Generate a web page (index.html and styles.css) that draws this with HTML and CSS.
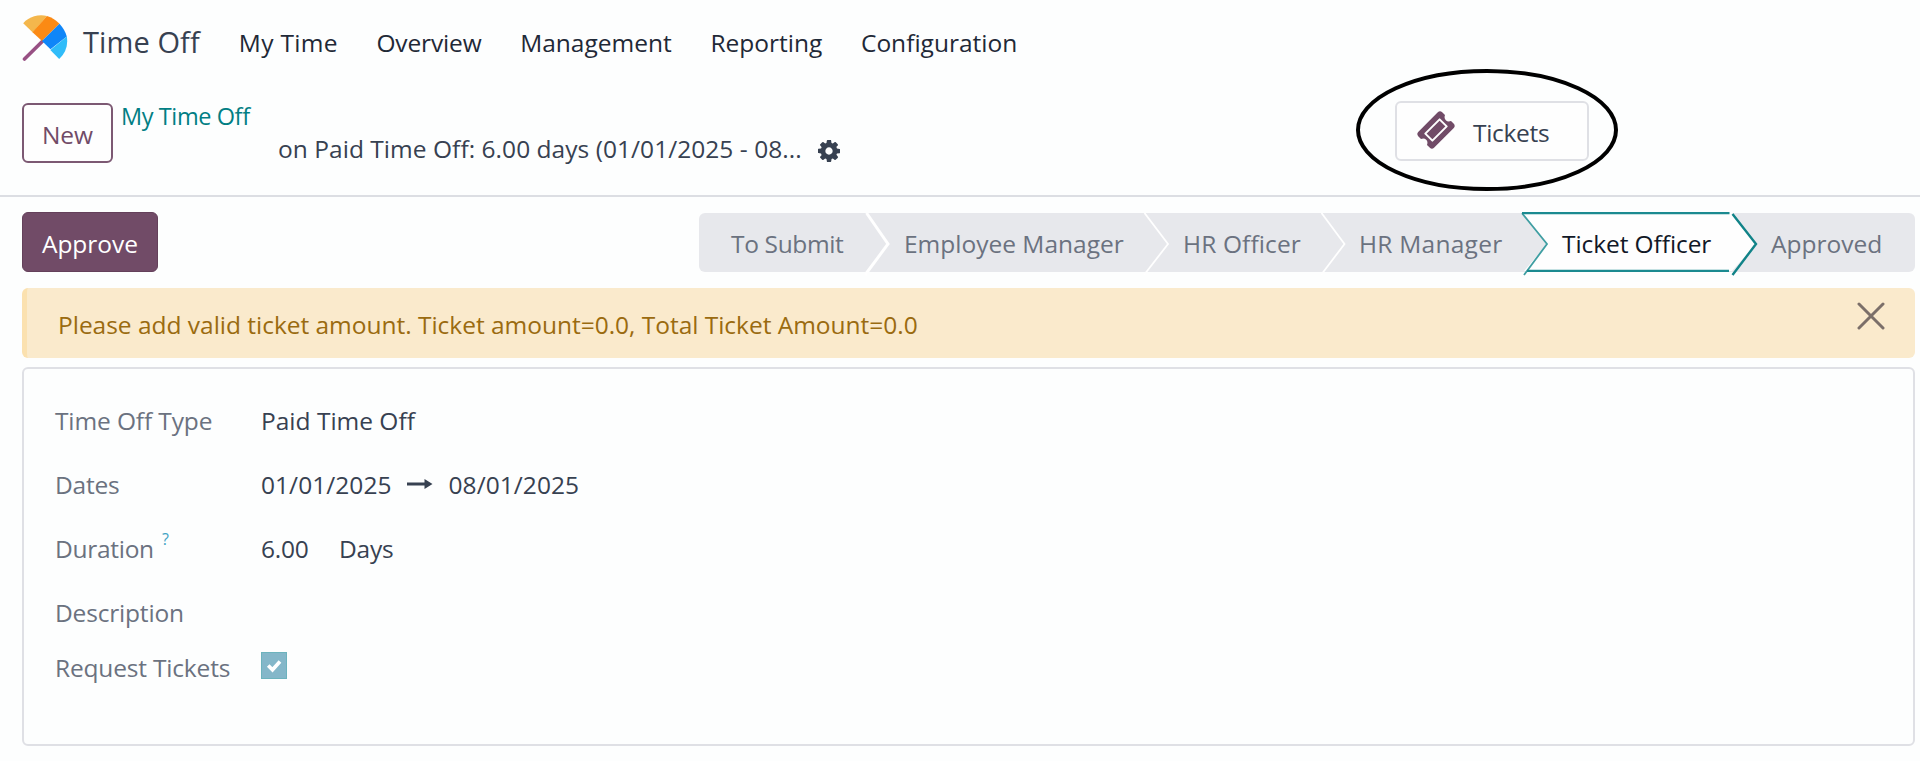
FILE: index.html
```html
<!DOCTYPE html>
<html lang="en">
<head>
<meta charset="utf-8">
<title>Time Off</title>
<link rel="stylesheet" href="styles.css">
</head>
<body>
<header class="navbar">
  <svg class="logo" viewBox="0 0 46 48" width="46" height="48">
    <path d="M2.500 45L20.500 27.300" stroke="#985184" stroke-width="3.600" stroke-linecap="round" fill="none"/>
    <path d="M1.200 9.200A24.500 24.500 0 0 1 25 2L10.800 18.500Z" fill="#f4b74c"/>
    <path d="M25 2Q32 4 37.500 9.800L20 27L10.500 18.200Z" fill="#fb8a14"/>
    <path d="M37.500 9.800Q43 16 44.800 22.500L28.500 35.300L20 27Z" fill="#0f86f8"/>
    <path d="M44.800 22.500Q47 36 37.200 45L28.300 36Z" fill="#30bcf9"/>
  </svg>
  <span class="app-name">Time Off</span>
  <nav class="menu">
    <a class="menu-my">My Time</a>
    <a class="menu-overview">Overview</a>
    <a>Management</a>
    <a>Reporting</a>
    <a>Configuration</a>
  </nav>
</header>

<section class="control">
  <button class="btn btn-new">New</button>
  <div class="crumbs">
    <a class="crumb-link">My Time Off</a>
    <div class="crumb-current">
      <span>on Paid Time Off: 6.00 days (01/01/2025 - 08...</span>
      <svg class="gear" viewBox="0 0 1536 1536" width="22" height="22"><path fill="#374151" d="M1024 768q0-106-75-181t-181-75-181 75-75 181 75 181 181 75 181-75 75-181zm512-109v222q0 12-8 23t-20 13l-185 28q-19 54-39 91 35 50 107 138 10 12 10 25t-9 23q-27 37-99 108t-94 71q-12 0-26-9l-138-108q-44 23-91 38-16 136-29 186-7 28-36 28H657q-14 0-24.500-8.500T621 1506l-28-184q-49-16-90-37l-141 107q-10 9-25 9-14 0-25-11-126-114-165-168-7-10-7-23 0-12 8-23 15-21 51-66.500t54-70.500q-27-50-41-99L29 913q-13-2-21-12.500T0 877V655q0-12 8-23t19-13l186-28q14-46 39-92-40-57-107-138-10-12-10-24 0-10 9-23 26-36 98.500-107.500T337 135q13 0 26 10l138 107q44-23 91-38 16-136 29-186 7-28 36-28h222q14 0 24.500 8.500T915 30l28 184q49 16 90 37l142-107q9-9 24-9 13 0 25 10 129 119 165 170 7 8 7 22 0 12-8 23-15 21-51 66.500t-54 70.500q26 50 41 98l183 28q13 2 21 12.500t8 23.500z"/></svg>
    </div>
  </div>
  <div class="stat">
    <button class="btn btn-tickets">
      <svg class="ticket" viewBox="0 0 38 38" width="38" height="38">
        <path d="M20.800 1.200Q23 -.8 25.200 1.200L28 4Q26.800 7.200 28.800 9.200Q30.800 11.200 34 10L36.800 12.800Q38.600 15 36.800 17L17 36.800Q15 38.600 12.900 36.800L10 34Q11.200 30.800 9.200 28.800Q7.200 26.800 4 28L1.200 25.200Q-.6 23 1.200 20.900Z" fill="#714b67"/>
        <path d="M22.600 8.400L29.700 15.400L15.400 29.600L8.300 22.600Z" fill="none" stroke="#fefefe" stroke-width="2" stroke-linejoin="round"/>
      </svg>
      <span class="tickets-label">Tickets</span>
    </button>
    <svg class="ring" viewBox="0 0 262 122" width="262" height="122"><ellipse cx="131" cy="61" rx="129" ry="59" fill="none" stroke="#000" stroke-width="4"/></svg>
  </div>
</section>

<section class="statusrow">
  <button class="btn btn-approve">Approve</button>
  <ol class="steps">
    <li class="step s1">To Submit
      <svg class="chev" viewBox="0 0 32 64" width="32" height="64"><path d="M4.500 0L26 31L3 62" fill="none" stroke="#fff" stroke-width="3"/></svg></li>
    <li class="step s2">Employee Manager
      <svg class="chev" viewBox="0 0 32 64" width="32" height="64"><path d="M4.500 0L28 31L4 62" fill="none" stroke="#fff" stroke-width="1.800"/></svg></li>
    <li class="step s3">HR Officer
      <svg class="chev" viewBox="0 0 32 64" width="32" height="64"><path d="M4.500 0L27.500 31L4 62" fill="none" stroke="#fff" stroke-width="1.800"/></svg></li>
    <li class="step s4">HR Manager</li>
    <li class="step s5">Ticket Officer
      <svg class="frame" viewBox="0 0 240 68" width="240" height="68">
        <path d="M4 3H213L237 34L213 61H5L28 34Z" fill="#fefefe"/>
        <path d="M3 3.200L28 34L5 65" fill="none" stroke="#3f9ea2" stroke-width="1.800"/>
        <path d="M3 3.200H210.500M8 60.800H210" stroke="#1b8a90" stroke-width="2.200"/>
        <path d="M213.500 4L237 34L213.500 65" fill="none" stroke="#118388" stroke-width="2.400"/>
      </svg></li>
    <li class="step s6">Approved</li>
  </ol>
</section>

<div class="alert">
  <span>Please add valid ticket amount. Ticket amount=0.0, Total Ticket Amount=0.0</span>
  <svg class="close" viewBox="0 0 28 28" width="28" height="28"><path d="M2 2L26 26M26 2L2 26" stroke="#7b6f69" stroke-width="3" stroke-linecap="round"/></svg>
</div>

<main class="sheet">
  <div class="field"><span class="label l-type">Time Off Type</span><span class="value">Paid Time Off</span></div>
  <div class="field"><span class="label l-dates">Dates</span><span class="value v-date">01/01/2025</span>
    <svg class="arrow" viewBox="0 0 26 12" width="26" height="12"><path d="M0 4.600H17.500V1L25.500 6L17.500 11V7.400H0Z" fill="#374151"/></svg>
    <span class="v-date">08/01/2025</span></div>
  <div class="field"><span class="label l-duration">Duration<sup class="help">?</sup></span><span class="value v-num">6.00</span><span class="unit">Days</span></div>
  <div class="field"><span class="label l-desc">Description</span></div>
  <div class="field f-check"><span class="label l-request">Request Tickets</span>
    <span class="check"><svg viewBox="0 0 26 27" width="26" height="27"><path d="M7.200 13.500L11.500 17.800L19 9.500" fill="none" stroke="#fff" stroke-width="3.600"/></svg></span></div>
</main>
</body>
</html>
```

FILE: styles.css
```css
* { box-sizing: border-box; }

body {
  margin: 0;
  height: 761px;
  overflow: hidden;
  background: #fdfefe;
  color: #374151;
  font: 24.5px/33px "Open Sans", "Noto Sans", sans-serif;
  white-space: nowrap;
}

svg { display: block; flex: none; }

.navbar { display: flex; align-items: center; height: 85px; padding-left: 22px; }
.logo { margin-bottom: 10px; }
.app-name { margin: 0 0 2px 15px; font-size: 29px; letter-spacing: .1px; }
.menu { display: flex; gap: 38.7px; margin-left: 39px; color: #1f2937; }
.menu-my { letter-spacing: .3px; }
.menu-overview { letter-spacing: -.15px; }

.btn {
  display: flex;
  align-items: center;
  justify-content: center;
  height: 60px;
  padding: 3px 0 0;
  border-radius: 6px;
  font: inherit;
}

.control {
  display: flex;
  align-items: flex-start;
  height: 112px;
  padding: 18px 0 0 22px;
  border-bottom: 2px solid #dcdee3;
}
.btn-new { width: 91px; border: 2px solid #7c5973; background: #fefefe; color: #714b67; padding-top: 2px; }
.crumbs { margin: -3px 0 0 8px; }
.crumb-link { display: block; font-size: 23.5px; letter-spacing: -.4px; color: #017e84; }
.crumb-current { display: flex; align-items: center; margin-top: -1px; padding-left: 157px; letter-spacing: .04px; }
.gear { margin: 4px 0 0 16px; }
.stat { position: relative; margin: -2px 331px 0 auto; }
.btn-tickets { width: 194px; border: 2px solid #dfe0e5; background: #fefefe; color: #374151; justify-content: flex-start; padding: 2px 0 0 20px; }
.ticket { margin-bottom: 4px; }
.tickets-label { margin-left: 18px; letter-spacing: -.3px; }
.ring { position: absolute; left: -39px; top: -32px; }

.statusrow { display: flex; justify-content: space-between; align-items: flex-start; padding: 15px 5px 0 22px; height: 91px; }
.btn-approve { width: 136px; border: 1px solid #64405a; background: #714b67; color: #fff; }
.steps {
  display: grid;
  grid-template-columns: 167px 278px 177px 201px 211px 182px;
  height: 59px;
  margin: 1px 0 0;
  padding: 0;
  list-style: none;
  border-radius: 6px;
  background: #e7e8ec;
  color: #6b7280;
}
.step { position: relative; padding: 14px 0 0 38px; }
.s1 { padding-left: 32px; letter-spacing: -.35px; }
.s3 { padding-left: 39px; letter-spacing: .12px; }
.s4 { letter-spacing: .25px; }
.s5 { padding-left: 40px; color: #111827; z-index: 1; letter-spacing: -.08px; }
.s6 { letter-spacing: 0; }
.chev { position: absolute; right: -28px; top: 0; z-index: 1; }
.frame { position: absolute; left: -3px; top: -3px; z-index: -1; }

.alert {
  display: flex;
  justify-content: space-between;
  align-items: flex-start;
  height: 70px;
  margin: 0 5px 0 22px;
  padding: 20px 30px 0 31px;
  border-left: 5px solid #fbe1af;
  border-radius: 6px;
  background: #faeacc;
  color: #9a6b10;
  letter-spacing: -.02px;
}
.close { margin-top: -6px; }

.sheet {
  height: 379px;
  margin: 9px 5px 0 22px;
  padding: 35px 0 0 31px;
  border: 2px solid #dfe0e5;
  border-radius: 6px;
}
.field { display: flex; align-items: flex-start; height: 64px; }
.label { width: 206px; color: #6b7280; }
.l-type { letter-spacing: -.12px; }
.l-dates { letter-spacing: -.2px; }
.l-duration { letter-spacing: -.28px; }
.l-desc { letter-spacing: -.18px; }
.l-request { letter-spacing: -.18px; }
.v-date { letter-spacing: .05px; }
.arrow { margin: 10px 16px 0 15px; }
.v-num { width: 78px; letter-spacing: -.2px; }
.unit { letter-spacing: -.2px; }
.help { margin-left: 8px; font-size: 16px; line-height: 0; vertical-align: 13px; color: #3fa3c4; }
.f-check { margin-top: -9px; }
.check { width: 26px; height: 27px; margin-top: 1px; background: #84b7c9; border: 1px solid #6cb3bd; }
.check svg { margin: -1px; }
```
